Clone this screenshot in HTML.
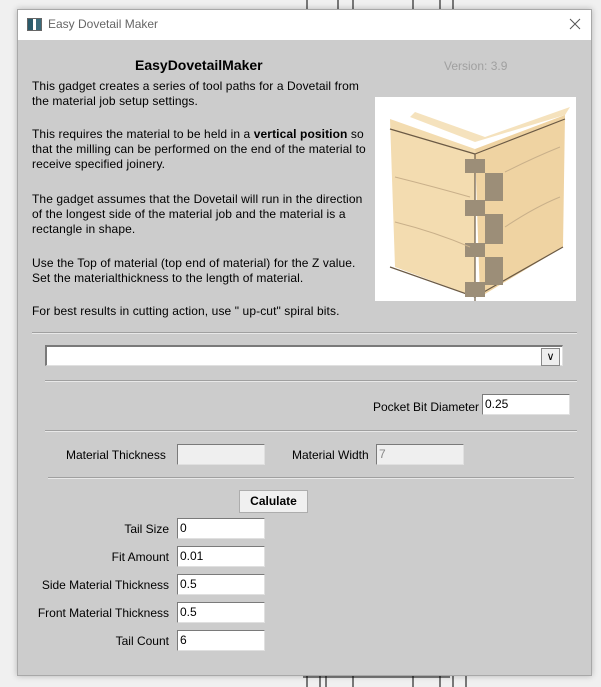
<!DOCTYPE html>
<html><head><style>
body{margin:0;width:601px;height:687px;background:#f0f0f0;position:relative;overflow:hidden;font-family:"Liberation Sans",Arial,sans-serif;font-size:12px;color:#000}
.a{position:absolute}
.win{left:17px;top:9px;width:573px;height:665px;background:#cccccc;border:1px solid #a8a8a8;box-shadow:0 0 6px rgba(0,0,0,.25)}
.tb{left:0;top:0;width:573px;height:30px;background:#fff}
.p{left:14px;line-height:15px;white-space:nowrap;letter-spacing:0.1px}
.sep{height:0;border-top:1px solid #a0a0a0;border-bottom:1px solid #e8e8e8}
.in{background:#fff;border:1px solid #7a7a7a;border-right-color:#e0e0e0;border-bottom-color:#e0e0e0;height:18px;box-sizing:border-box;width:88px;padding-left:2px;line-height:19px;font-size:12px}
.dis{background:#efefef;color:#888}
.lb{text-align:right;width:160px;left:-9px}
</style></head><body>
<svg class="a" style="left:290px;top:0" width="200" height="9"><path d="M48 0V9M63 0V9M123 0V9M150 0V9M163 0V9M17 0V9" stroke="#000"/></svg>
<svg class="a" style="left:290px;top:674px" width="200" height="13"><path d="M17 0V13M30 0V13M36 0V13M63 0V13M123 0V13M150 0V13M163 0V13M176 0V13M13 3H160" stroke="#000" fill="none"/></svg>
<div class="a win">
 <div class="a tb">
  <div class="a" style="left:9px;top:8px;width:13px;height:11px;border:1px solid #666;background:linear-gradient(90deg,#2a5a6a 0 40%,#fff 40% 60%,#3a6a7a 60%)"></div>
  <div class="a" style="left:30px;top:7px;color:#666;font-size:12px">Easy Dovetail Maker</div>
  <svg class="a" style="left:551px;top:8px" width="12" height="12"><path d="M1 1L11 11M11 1L1 11" stroke="#555" stroke-width="1"/></svg>
 </div>
 <div class="a" style="left:117px;top:47px;font-weight:bold;font-size:14px">EasyDovetailMaker</div>
 <div class="a" style="left:426px;top:49px;color:#a0a0a0">Version: 3.9</div>
 <div class="a p" style="top:69px">This gadget creates a series of tool paths for a Dovetail from<br>the material job setup settings.</div>
 <div class="a p" style="top:117px">This requires the material to be held in a <b>vertical position</b> so<br>that the milling can be performed on the end of the material to<br>receive specified joinery.</div>
 <div class="a p" style="top:182px">The gadget assumes that the Dovetail will run in the direction<br>of the longest side of the material job and the material is a<br>rectangle in shape.</div>
 <div class="a p" style="top:246px">Use the Top of material (top end of material) for the Z value.<br>Set the materialthickness to the length of material.</div>
 <div class="a p" style="top:294px">For best results in cutting action, use " up-cut" spiral bits.</div>
 <svg class="a" style="left:357px;top:87px" width="201" height="204" viewBox="0 0 201 204">
  <rect width="201" height="204" fill="#fff"/>
  <path d="M15 22 L100 52 L100 200 L20 170 Z" fill="#f3dcb0"/>
  <path d="M100 52 L190 18 L188 150 L105 200 Z" fill="#efd3a2"/>
  <path d="M35 20 L100 45 L190 18 L195 10 L110 40 L40 15Z" fill="#f5e2bd"/>
  <path d="M15 32 L100 57 M100 57 L190 22 M100 57 L100 204 M15 170 L100 200 L188 150" stroke="#6b5a45" stroke-width="1.2" fill="none"/>
  <g fill="#9c8e78"><path d="M90 62h20v14h-20z"/><path d="M110 76h18v28h-18z"/><path d="M90 103h20v16h-20z"/><path d="M110 117h18v30h-18z"/><path d="M90 146h20v14h-20z"/><path d="M110 160h18v28h-18z"/><path d="M90 185h20v15h-20z"/></g>
  <path d="M20 80 Q60 90 95 100 M20 125 Q60 135 95 150 M130 75 Q160 60 185 50 M130 130 Q160 110 185 100" stroke="#c9b08a" fill="none"/>
 </svg>
 <div class="a sep" style="left:14px;top:322px;width:545px"></div>
 <div class="a in" style="left:27px;top:335px;width:518px;height:21px;border-width:2px 1px 1px 2px"></div>
 <div class="a" style="left:523px;top:338px;width:17px;height:16px;background:#eee;border:1px solid #888;text-align:center;line-height:16px;font-size:11px">&#x2228;</div>
 <div class="a sep" style="left:27px;width:532px;top:370px"></div>
 <div class="a" style="left:355px;top:390px">Pocket Bit Diameter</div>
 <div class="a in" style="left:464px;top:384px;width:88px;height:21px">0.25</div>
 <div class="a sep" style="left:27px;top:420px;width:532px"></div>
 <div class="a" style="left:48px;top:438px">Material Thickness</div>
 <div class="a in dis" style="left:159px;top:434px;height:21px"></div>
 <div class="a" style="left:274px;top:438px">Material Width</div>
 <div class="a in dis" style="left:358px;top:434px;height:21px">7</div>
 <div class="a sep" style="left:30px;top:467px;width:526px"></div>
 <div class="a" style="left:221px;top:480px;width:67px;height:21px;background:#f0f0f0;border:1px solid #adadad;text-align:center;line-height:21px;font-weight:bold">Calulate</div>
 <div class="a lb" style="top:512px">Tail Size</div><div class="a in" style="left:159px;top:508px;height:21px">0</div>
 <div class="a lb" style="top:540px">Fit Amount</div><div class="a in" style="left:159px;top:536px;height:21px">0.01</div>
 <div class="a lb" style="top:568px">Side Material Thickness</div><div class="a in" style="left:159px;top:564px;height:21px">0.5</div>
 <div class="a lb" style="top:596px">Front Material Thickness</div><div class="a in" style="left:159px;top:592px;height:21px">0.5</div>
 <div class="a lb" style="top:624px">Tail Count</div><div class="a in" style="left:159px;top:620px;height:21px">6</div>
</div>
</body></html>
